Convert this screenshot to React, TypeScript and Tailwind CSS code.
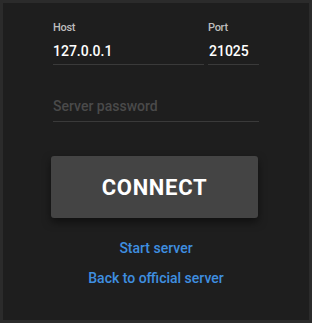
import React from "react";

export default function App() {
  return (
    <div className="w-[312px] h-[323px] bg-[#2b2b2b] p-[3px]" style={{ fontFamily: "Roboto, 'Liberation Sans', sans-serif" }}>
      <div className="h-full bg-[#1e1e1e] flex flex-col items-center">
        <div className="w-[206px] mt-[18px] flex gap-[4px]">
          <div className="flex-1 flex flex-col">
            <label className="text-[11px] leading-[13px] font-medium text-[#bdbdbd] tracking-[-0.3px]">Host</label>
            <div className="mt-[7px] h-[24px] border-b border-[#3a3a3a] text-[14px] leading-[20px] font-medium text-white">127.0.0.1</div>
          </div>
          <div className="w-[51px] flex flex-col">
            <label className="text-[11px] leading-[13px] font-medium text-[#bdbdbd] tracking-[-0.3px]">Port</label>
            <div className="mt-[7px] h-[24px] border-b border-[#3a3a3a] text-[14px] leading-[20px] font-medium text-white pl-[1px]">21025</div>
          </div>
        </div>
        <div className="w-[206px] mt-[31px] h-[26px] border-b border-[#3a3a3a] text-[14px] leading-[20px] font-medium text-[#4a4a4a]">
          Server password
        </div>
        <button className="mt-[34px] w-[207px] h-[62px] rounded-[3px] bg-[#444444] text-white text-[22px] font-bold tracking-[0.7px] shadow-[0_4px_8px_rgba(0,0,0,0.5)] ml-[-3px]">
          CONNECT
        </button>
        <div className="mt-[20px] text-[14px] leading-[20px] font-medium text-[#3f8fe0]">Start server</div>
        <div className="mt-[10px] text-[14px] leading-[20px] font-medium text-[#3f8fe0]">Back to official server</div>
      </div>
    </div>
  );
}
